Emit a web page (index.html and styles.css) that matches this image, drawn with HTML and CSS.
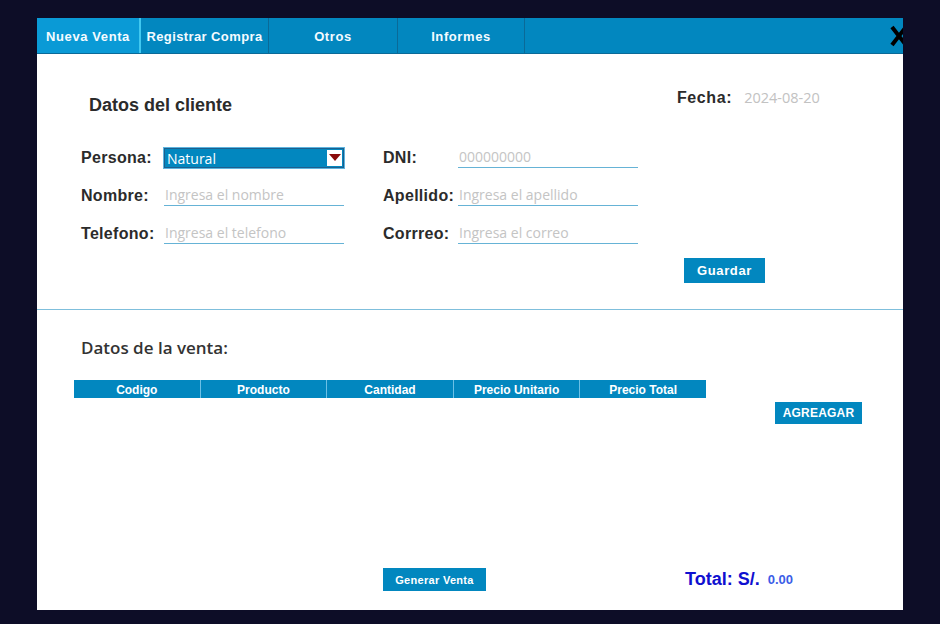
FILE: index.html
```html
<!DOCTYPE html>
<html lang="es">
<head>
<meta charset="utf-8">
<title>Nueva Venta</title>
<link rel="stylesheet" href="styles.css">
</head>
<body>
<div class="panel">
  <div class="tabbar">
    <div class="tab active">Nueva Venta</div>
    <div class="tab w128">Registrar Compra</div>
    <div class="tab w129">Otros</div>
    <div class="tab w127">Informes</div>
    <svg class="close" width="20" height="24" viewBox="0 0 20 24"><path d="M3 3 L17 21 M17 3 L3 21" stroke="#000" stroke-width="4" stroke-linecap="butt"/></svg>
  </div>

  <section class="client">
    <div class="head">
      <h2 class="title">Datos del cliente</h2>
      <div class="fecha"><span class="flabel">Fecha:</span><span class="fdate">2024-08-20</span></div>
    </div>
    <div class="form">
      <label class="lbl">Persona:</label>
      <div class="select"><span>Natural</span><span class="arrow"><svg width="12" height="8" viewBox="0 0 12 8"><path d="M0 0 H12 L6 7 Z" fill="#8a0a0a"/></svg></span></div>
      <span></span>
      <label class="lbl">DNI:</label>
      <div class="input">000000000</div>

      <label class="lbl">Nombre:</label>
      <div class="input">Ingresa el nombre</div>
      <span></span>
      <label class="lbl">Apellido:</label>
      <div class="input">Ingresa el apellido</div>

      <label class="lbl">Telefono:</label>
      <div class="input">Ingresa el telefono</div>
      <span></span>
      <label class="lbl">Corrreo:</label>
      <div class="input">Ingresa el correo</div>
    </div>
    <button class="btn guardar">Guardar</button>
  </section>

  <section class="sale">
    <h3 class="stitle">Datos de la venta:</h3>
    <div class="tablewrap">
      <div class="thead">
        <div class="th">Codigo</div>
        <div class="th">Producto</div>
        <div class="th">Cantidad</div>
        <div class="th">Precio Unitario</div>
        <div class="th">Precio Total</div>
      </div>
      <button class="btn agregar">AGREAGAR</button>
    </div>
    <div class="footer">
      <button class="btn generar">Generar Venta</button>
      <div class="total"><span class="tlabel">Total: S/.</span><span class="tval">0.00</span></div>
    </div>
  </section>
</div>
</body>
</html>
```
FILE: styles.css
```css
html, body {
  margin: 0;
  padding: 0;
  background: #0d0d27;
  height: 100%;
}
body {
  font-family: "Liberation Sans", Arial, sans-serif;
  overflow: hidden;
}
.panel {
  margin: 18px 0 0 37px;
  width: 866px;
  height: 592px;
  background: #ffffff;
  display: flex;
  flex-direction: column;
  overflow: hidden;
}
.tabbar {
  position: relative;
  height: 36px;
  background: #0287bf;
  border-bottom: 1px solid #0a6a98;
  box-sizing: border-box;
  display: flex;
  flex: none;
}
.tab {
  width: 104px;
  box-sizing: border-box;
  display: flex;
  align-items: center;
  justify-content: center;
  color: #f4fbff;
  font-weight: bold;
  font-size: 13px;
  letter-spacing: 0.6px;
  padding-top: 1px;
  border-right: 1px solid #0a6a98;
}
.tab.active {
  background: #0a9ad6;
  border-right: 2px solid #40c8f0;
}
.tab.w128 { width: 128px; letter-spacing: 0.4px; }
.tab.w129 { width: 129px; }
.tab.w127 { width: 127px; }
.close {
  position: absolute;
  right: -6px;
  top: 6px;
}

.client {
  height: 256px;
  flex: none;
  box-sizing: border-box;
  padding-left: 44px;
  border-bottom: 1px solid #7fbfdc;
}
.head {
  display: grid;
  grid-template-columns: 596px auto;
  padding-top: 33px;
  align-items: start;
}
.title {
  margin: 7px 0 0 8px;
  font-size: 18px;
  line-height: 22px;
  font-weight: bold;
  color: #2b2b2b;
}
.fecha {
  display: flex;
  align-items: center;
  height: 22px;
}
.flabel {
  font-size: 16px;
  font-weight: bold;
  color: #2b2b2b;
  letter-spacing: 0.6px;
}
.fdate {
  margin-left: 12px;
  margin-top: -2px;
  font-family: "Open Sans", sans-serif;
  font-size: 14.5px;
  color: #c2c2c2;
}
.form {
  margin-top: 32px;
  display: grid;
  grid-template-columns: 83px 180px 39px 75px 180px;
  grid-auto-rows: 20px;
  row-gap: 18px;
  align-items: center;
}
.lbl {
  font-size: 16px;
  font-weight: bold;
  color: #2b2b2b;
  letter-spacing: 0.3px;
  white-space: nowrap;
}
.input {
  height: 20px;
  box-sizing: border-box;
  border-bottom: 1px solid #66b3d6;
  font-family: "Open Sans", sans-serif;
  font-size: 14px;
  line-height: 17px;
  color: #c4c4c4;
  padding-left: 1px;
  white-space: nowrap;
}
.select {
  height: 20px;
  box-sizing: border-box;
  background: #0287bf;
  border: 1px solid #1d5f8e;
  box-shadow: 0 0 0 1px #5db4de;
  display: flex;
  align-items: center;
  justify-content: space-between;
  color: #ffffff;
  font-family: "Open Sans", sans-serif;
  font-size: 14px;
  padding-left: 2px;
}
.select span:first-child { margin-top: 1px; }
.arrow {
  width: 15px;
  height: 16px;
  background: #ffffff;
  margin-right: 1px;
  display: flex;
  align-items: center;
  justify-content: center;
}
.btn {
  border: none;
  background: #0287bf;
  color: #ffffff;
  font-family: "Liberation Sans", Arial, sans-serif;
  font-weight: bold;
  padding: 0;
  display: block;
}
.guardar {
  margin: 14px 0 0 603px;
  width: 81px;
  height: 25px;
  font-size: 13px;
  letter-spacing: 0.6px;
}

.sale {
  flex: 1;
  display: flex;
  flex-direction: column;
  padding-bottom: 19px;
  box-sizing: border-box;
}
.stitle {
  margin: 26px 0 0 44px;
  font-family: "Open Sans", sans-serif;
  font-weight: 600;
  font-size: 17px;
  line-height: 24px;
  color: #333333;
}
.tablewrap {
  margin-top: 20px;
  padding-left: 37px;
}
.thead {
  display: flex;
  width: 632px;
  height: 18px;
  background: #0287bf;
}
.th {
  flex: 1;
  display: flex;
  align-items: center;
  justify-content: center;
  padding-top: 1px;
  color: #ffffff;
  font-size: 12px;
  font-weight: bold;
  border-right: 1px solid #6cc0e6;
}
.th:last-child { border-right: none; }
.agregar {
  margin: 4px 0 0 701px;
  width: 87px;
  height: 22px;
  font-size: 12px;
  letter-spacing: 0.2px;
}
.footer {
  margin-top: auto;
  display: flex;
  align-items: center;
  padding-left: 346px;
}
.generar {
  width: 103px;
  height: 23px;
  font-size: 11px;
  letter-spacing: 0.3px;
}
.total {
  margin-left: 199px;
  display: flex;
  align-items: center;
}
.tlabel {
  font-size: 18px;
  font-weight: bold;
  color: #1010d0;
}
.tval {
  margin-left: 8px;
  font-size: 13px;
  font-weight: bold;
  color: #3b5de7;
}
```
